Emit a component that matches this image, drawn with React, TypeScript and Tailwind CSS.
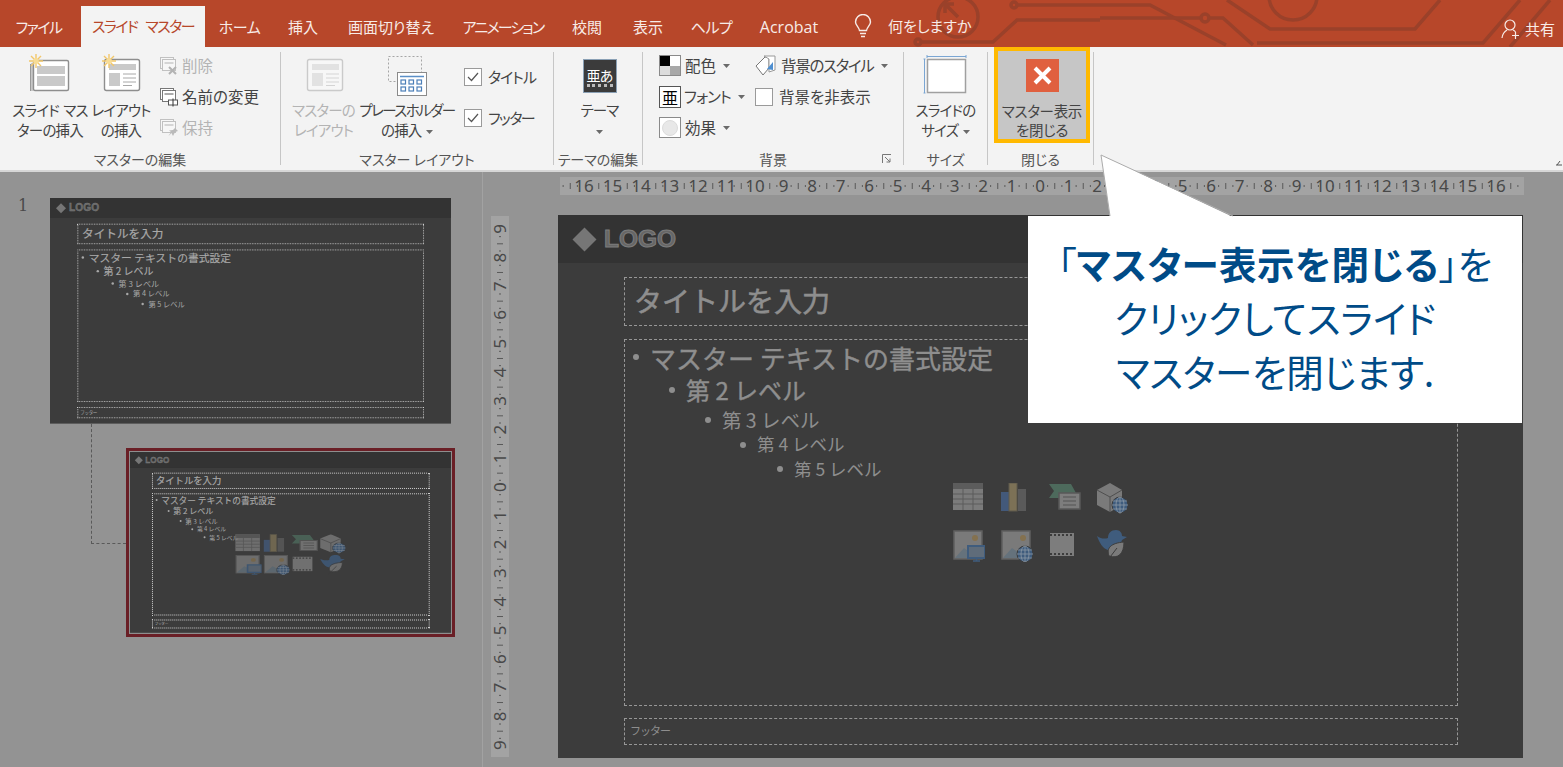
import React from "react";

const Caret = ({ className = "" }: { className?: string }) => (
  <svg width="7" height="4" viewBox="0 0 7 4" className={`inline-block ${className}`}>
    <path d="M0 0h7L3.5 4z" fill="#6a6a6a" />
  </svg>
);

// red title bar circuit decoration
const Circuit = () => (
  <svg width="660" height="47" viewBox="900 0 660 47" className="absolute right-[3px] top-0" fill="none" stroke="#9a412a" strokeWidth="3.5">
    <circle cx="958" cy="17" r="20" />
    <path d="M945 4l13 13M945 4v9M945 4h9" />
    <circle cx="918" cy="42" r="3" />
    <path d="M921 42h72l24-22h83" />
    <circle cx="1014" cy="5" r="3" />
    <path d="M1017 5h133l76 40" />
    <path d="M1100 18h101" />
    <circle cx="1205" cy="18" r="4" />
    <path d="M1209 18h14l30 27" />
    <circle cx="1293" cy="-4" r="24" />
    <path d="M1227 0l43 29h145l25-29" />
    <path d="M1257 43h226l37-43" />
    <path d="M1510 47l40-47" />
  </svg>
);

const Tab = ({ label, className }: { label: string; className: string }) => (
  <div className={`h-full flex items-center justify-center pt-[7px] text-[15px] text-[#f7ebe7] ${className}`}>{label}</div>
);

const TabBar = () => (
  <div className="relative h-[47px] bg-[#b7472a] flex shrink-0 overflow-hidden">
    <Circuit />
    <Tab label="ファイル" className="w-[77px] tracking-[-1.5px]" />
    <div className="ml-[4px] mt-[6px] h-[41px] w-[124px] bg-[#f3f3f3] text-[#b7472a] text-[15px] tracking-[-1.5px] [word-spacing:6px] flex items-center justify-center">スライド マスター</div>
    <Tab label="ホーム" className="w-[69px] tracking-[-0.5px]" />
    <Tab label="挿入" className="w-[58px]" />
    <Tab label="画面切り替え" className="w-[118px]" />
    <Tab label="アニメーション" className="w-[106px] tracking-[-1.8px]" />
    <Tab label="校閲" className="w-[62px]" />
    <Tab label="表示" className="w-[60px]" />
    <Tab label="ヘルプ" className="w-[67px] tracking-[-0.5px]" />
    <div className="w-[88px] h-full flex items-center justify-center pt-[7px] text-[16px] text-[#f7ebe7] font-['Open_Sans',sans-serif]">Acrobat</div>
    <div className="relative ml-[21px] flex items-center pt-[5px] text-[15px] text-[#f7ebe7]">
      <svg width="18" height="24" viewBox="0 0 18 24" fill="none" stroke="#f7ebe7" strokeWidth="1.4" className="mr-[16px]">
        <path d="M5.5 16.5C5 13 1.500 11.500 1.500 8a7.500 7.500 0 0 1 15 0c0 3.500-3.500 5-4 8.500z" />
        <path d="M6 19.500h6M7 22.500h4" />
      </svg>
      何をしますか
    </div>
    <div className="absolute right-[8px] top-0 h-full flex items-center pt-[11px] text-[15px] text-[#f7ebe7]">
      <svg width="20" height="21" viewBox="0 0 20 21" fill="none" stroke="#f7ebe7" strokeWidth="1.2" className="mr-[4px]">
        <circle cx="9" cy="6" r="5" />
        <path d="M1 19c.5-4 2.500-6.500 5-8M12 11c1 .5 2 1.200 2.500 2M14.500 13v7M11 16.500h7" />
      </svg>
      共有
    </div>
  </div>
);

const Star = ({ x, y }: { x: number; y: number }) => (
  <g stroke="#f2c76a" strokeWidth="1.4">
    <path d={`M${x - 7} ${y}h14M${x} ${y - 7}v14M${x - 5} ${y - 5}l10 10M${x + 5} ${y - 5}l-10 10`} />
    <circle cx={x} cy={y} r="2.800" fill="#f7dc95" stroke="none" />
  </g>
);

const InsertSlideIcon = () => (
  <svg width="44" height="48" viewBox="0 0 44 48">
    <path d="M2.500 12v27M4 11v28" stroke="#9a9a9a" fill="none" />
    <rect x="5.500" y="8.500" width="35" height="30" rx="1.500" fill="#fff" stroke="#8e8e8e" strokeWidth="1.400" />
    <rect x="9" y="14" width="28" height="8" fill="#c9c9c9" />
    <rect x="9" y="24" width="28" height="10" fill="#c9c9c9" />
    <Star x={8} y={9} />
  </svg>
);

const LayoutIcon = ({ faded = false, star = false }: { faded?: boolean; star?: boolean }) => (
  <svg width="44" height="48" viewBox="0 0 44 48" className={faded ? "opacity-40" : ""}>
    <rect x="5.500" y="7.500" width="35" height="31" rx="2" fill="#fff" stroke="#8e8e8e" strokeWidth="1.400" />
    <rect x="10" y="12" width="27" height="6" fill="#c9c9c9" />
    <rect x="10" y="21" width="11" height="13" fill="#c9c9c9" />
    <path d="M24 22h13M24 26h13M24 30h13M24 33.500h9" stroke="#a8a8a8" />
    {star && <Star x={10} y={9} />}
  </svg>
);

const PlaceholderIcon = () => (
  <svg width="44" height="48" viewBox="0 0 44 48">
    <rect x="3.500" y="4.500" width="33" height="25" fill="none" stroke="#a5a5a5" strokeDasharray="2 2" />
    <rect x="12.500" y="20.500" width="29" height="23" fill="#fff" stroke="#8a8a8a" />
    <path d="M15 24.500h24" stroke="#5a8fc7" strokeWidth="1.500" />
    <g fill="none" stroke="#4c7fb8" strokeWidth="1.200">
      <rect x="16" y="28" width="4.500" height="4" />
      <rect x="24" y="28" width="4.500" height="4" />
      <rect x="32" y="28" width="4.500" height="4" />
      <rect x="16" y="35" width="4.500" height="4" />
      <rect x="24" y="35" width="4.500" height="4" />
      <rect x="32" y="35" width="4.500" height="4" />
    </g>
  </svg>
);

const SmallStack = ({ kind, faded }: { kind: "x" | "rename" | "pin"; faded?: boolean }) => (
  <svg width="20" height="20" viewBox="0 0 20 20" className={`mr-[3px] ${faded ? "opacity-40" : ""}`}>
    <rect x="1.500" y="1.500" width="13" height="11" fill="#fff" stroke="#777" />
    <rect x="3.500" y="3.500" width="13" height="11" fill="#fff" stroke="#777" />
    <rect x="5.500" y="6" width="9" height="2" fill="#aaa" />
    {kind === "x" && <path d="M10 11l7 7M17 11l-7 7" stroke="#555" strokeWidth="2" />}
    {kind === "rename" && (
      <g>
        <rect x="9.500" y="13" width="9" height="5" fill="#fff" stroke="#555" />
        <path d="M14 11.500v8" stroke="#333" />
      </g>
    )}
    {kind === "pin" && <path d="M16 10l3 3-3 1-2 4-1.500-3-3 3 2.500-4-2-1.500 4-.5z" fill="#666" />}
  </svg>
);

const BigButton = ({ icon, lines, className = "", faded = false }: { icon: React.ReactNode; lines: React.ReactNode[]; className?: string; faded?: boolean }) => (
  <div className={`flex flex-col items-center text-[14.500px] tracking-[-0.8px] leading-[20px] whitespace-nowrap ${faded ? "text-[#b4b4b4]" : "text-[#444]"} ${className}`}>
    <div className="h-[48px] flex justify-center">{icon}</div>
    {lines.map((line, i) => (
      <div key={i}>{line}</div>
    ))}
  </div>
);

const SmallRow = ({ icon, label, faded = false, caret = false, labelClass = "" }: { icon: React.ReactNode; label: string; faded?: boolean; caret?: boolean; labelClass?: string }) => (
  <div className={`h-[31px] flex items-center text-[15.500px] whitespace-nowrap ${faded ? "text-[#b4b4b4]" : "text-[#444]"}`}>
    {icon}
    <span className={labelClass}>{label}</span>
    {caret && <Caret className="ml-[7px]" />}
  </div>
);

const CheckBox = ({ checked = true }: { checked?: boolean }) => (
  <div className="w-[18px] h-[18px] bg-white border border-[#9a9a9a] mr-[6px] flex items-center justify-center">
    {checked && (
      <svg width="12" height="10" viewBox="0 0 12 10" fill="none" stroke="#555" strokeWidth="1.200">
        <path d="M1 5l3.500 3.500L11 1" />
      </svg>
    )}
  </div>
);

const Group = ({ label, className, children, launcher = false }: { label: string; className: string; children: React.ReactNode; launcher?: boolean }) => (
  <div className={`relative h-[113px] mt-[5px] border-r border-[#c6c6c6] flex flex-col shrink-0 ${className}`}>
    <div className="h-[95px] flex">{children}</div>
    <div className="h-[18px] pt-[6px] flex items-center justify-center text-[14px] text-[#555] whitespace-nowrap">{label}</div>
    {launcher && (
      <svg width="10" height="10" viewBox="0 0 10 10" className="absolute right-[11px] bottom-[1px]" fill="none" stroke="#777">
        <path d="M.5 9V.5H9M3 3l5 5M8 4.500V8H4.500" />
      </svg>
    )}
  </div>
);

const Ribbon = () => (
  <div className="relative h-[125px] bg-[#f3f3f3] border-b-2 border-[#d6d6d6] flex shrink-0">
    <Group label="マスターの編集" className="w-[281px]">
      <BigButton
        icon={<InsertSlideIcon />}
        lines={[<span key="l" className="[word-spacing:2px]">スライド マス</span>, "ターの挿入"]}
        className="ml-[12px] w-[76px]"
      />
      <BigButton icon={<LayoutIcon star />} lines={["レイアウト", "の挿入"]} className="ml-[3px] w-[60px]" />
      <div className="ml-[8px] -mt-[2px]">
        <SmallRow icon={<SmallStack kind="x" faded />} label="削除" faded />
        <SmallRow icon={<SmallStack kind="rename" />} label="名前の変更" />
        <SmallRow icon={<SmallStack kind="pin" faded />} label="保持" faded />
      </div>
    </Group>
    <Group label="マスター レイアウト" className="w-[273px]">
      <BigButton icon={<LayoutIcon faded />} lines={["マスターの", "レイアウト"]} faded className="ml-[12px] w-[61px]" />
      <BigButton
        icon={<PlaceholderIcon />}
        lines={[
          <span key="l" className="tracking-[-1.6px]">プレースホルダー</span>,
          <span key="p">の挿入 <Caret className="ml-[2px] align-middle" /></span>,
        ]}
        className="ml-[4px] w-[98px]"
      />
      <div className="ml-[8px] mt-[16px]">
        <div className="h-[41px] flex items-start text-[15px] text-[#444] whitespace-nowrap"><CheckBox /><span className="-mt-[2px] tracking-[-1px]">タイトル</span></div>
        <div className="h-[38px] flex items-start text-[15px] text-[#444] whitespace-nowrap"><CheckBox /><span className="-mt-[2px] tracking-[-1.500px]">フッター</span></div>
      </div>
    </Group>
    <Group label="テーマの編集" className="w-[89px]">
      <BigButton
        icon={
          <div className="mt-[7px] w-[34px] h-[34px] bg-[#3b3b3b] border border-[#8aa0b5] flex flex-col items-center justify-center text-white text-[14px] leading-[18px]">
            亜あ
            <div className="w-[26px] h-[3px] border-t-[3px] border-dotted border-[#bbb]" />
          </div>
        }
        lines={["テーマ", <Caret key="c" />]}
        className="w-full pl-[3px]"
      />
    </Group>
    <Group label="背景" className="w-[261px]" launcher>
      <div className="ml-[16px] -mt-[2px] w-[96px] shrink-0">
        <SmallRow
          caret
          label="配色"
          icon={
            <div className="w-[22px] h-[21px] mr-[4px] grid grid-cols-2 border border-[#8a8a8a]">
              <div className="bg-black" />
              <div className="bg-white" />
              <div className="bg-[#dcdcdc]" />
              <div className="bg-[#a8a8a8]" />
            </div>
          }
        />
        <SmallRow
          caret
          label="フォント"
          labelClass="tracking-[-1px]"
          icon={
            <div className="w-[22px] h-[22px] mr-[3px] bg-white border border-[#555] flex items-center justify-center text-[16px] leading-none text-black">亜</div>
          }
        />
        <SmallRow
          caret
          label="効果"
          icon={
            <div className="w-[22px] h-[21px] mr-[4px] bg-white border border-[#8a8a8a] flex items-center justify-center">
              <div className="w-[16px] h-[16px] rounded-full bg-[#e8e8e8] border border-[#dcdcdc]" />
            </div>
          }
        />
      </div>
      <div className="-mt-[2px]">
        <SmallRow
          caret
          label="背景のスタイル"
          labelClass="tracking-[-1.300px]"
          icon={
            <svg width="22" height="22" viewBox="0 0 22 22" className="mr-[4px]">
              <path d="M1 11l9-9h4v11l-6 7z" fill="#fff" stroke="#777" />
              <path d="M9 1h11v14l-6 2V4z" fill="#fff" stroke="#999" />
              <path d="M12 14l6-7v8z" fill="#4f8fd0" />
            </svg>
          }
        />
        <SmallRow label="背景を非表示" icon={<CheckBox checked={false} />} />
      </div>
    </Group>
    <Group label="サイズ" className="w-[84px]">
      <BigButton
        icon={
          <svg width="46" height="48" viewBox="0 0 46 48">
            <rect x="4.500" y="7.500" width="38" height="33" fill="#fff" stroke="#a0a0a0" strokeWidth="1.500" />
            <path d="M4 4.500h39M4 3v3M43 3v3M1.500 7v34M.5 7h2M.5 41h2" stroke="#7ba6d3" fill="none" />
          </svg>
        }
        lines={["スライドの", <span key="s">サイズ <Caret className="ml-[2px] align-middle" /></span>]}
        className="w-full"
      />
    </Group>
    <Group label="閉じる" className="w-[106px]">
      <div className="ml-[6px] -mt-[5px] w-[96px] h-[96px] shrink-0 bg-[#c6c6c6] border-[4px] border-[#ffb900] flex flex-col items-center pt-[8px] text-[14.500px] tracking-[-0.3px] leading-[19px] text-[#444]">
        <div className="w-[33px] h-[33px] bg-[#e0603f] flex items-center justify-center mb-[9px]">
          <svg width="19" height="19" viewBox="0 0 19 19" stroke="#fff" strokeWidth="4">
            <path d="M2 2l15 15M17 2L2 17" />
          </svg>
        </div>
        <div className="whitespace-nowrap">マスター表示</div>
        <div>を閉じる</div>
      </div>
    </Group>
    <svg width="6" height="6" viewBox="0 0 6 6" className="absolute right-[1px] bottom-[4px]">
      <path d="M0 5h6M1 5l3-4" stroke="#555" fill="none" />
    </svg>
  </div>
);

const HRuler = () => {
  const pitch = 28.5;
  const zero = 480;
  const marks = [];
  for (let i = -17; i <= 16; i++) {
    const x = zero + i * pitch;
    marks.push(
      <g key={i}>
        {i >= -16 && (
          <text x={x} y="15" textAnchor="middle" fontSize="17" fill="#484848" fontFamily="'Noto Sans',sans-serif">
            {Math.abs(i)}
          </text>
        )}
        <rect x={x + pitch / 4} y="8" width="1" height="2" fill="#5a5a5a" />
        <rect x={x + pitch / 2} y="6" width="1" height="6" fill="#5a5a5a" />
        <rect x={x + (pitch * 3) / 4} y="8" width="1" height="2" fill="#5a5a5a" />
      </g>
    );
  }
  return (
    <svg width="964" height="18" viewBox="0 0 964 18" className="block overflow-visible ml-[77px] mt-[5px] bg-[#a3a3a3] shrink-0">
      {marks}
    </svg>
  );
};

const VRuler = () => {
  const pitch = 28.67;
  const zero = 271;
  const marks = [];
  for (let i = -9; i <= 8; i++) {
    const y = zero + i * pitch;
    marks.push(
      <g key={i}>
        <text x="9" y={y} transform={`rotate(-90 9 ${y})`} dy="6" textAnchor="middle" fontSize="17" fill="#484848" fontFamily="'Noto Sans',sans-serif">
          {Math.abs(i)}
        </text>
        <rect x="8" y={y + pitch / 4} width="2" height="1" fill="#5a5a5a" />
        <rect x="6" y={y + pitch / 2} width="6" height="1" fill="#5a5a5a" />
        <rect x="8" y={y + (pitch * 3) / 4} width="2" height="1" fill="#5a5a5a" />
      </g>
    );
  }
  return (
    <svg width="18" height="541" viewBox="0 0 18 541" className="block overflow-visible mt-[1px] ml-[8px] bg-[#a3a3a3] shrink-0">
      {marks}
      <text x="9" y={zero + 9 * pitch} transform={`rotate(-90 9 ${zero + 9 * pitch})`} dy="6" textAnchor="middle" fontSize="17" fill="#484848" fontFamily="'Noto Sans',sans-serif">
        9
      </text>
    </svg>
  );
};

const Globe = ({ x, y, r }: { x: number; y: number; r: number }) => (
  <g>
    <circle cx={x} cy={y} r={r} fill="#3f5c7d" stroke="#3c3c3c" />
    <path d={`M${x - r} ${y}h${r * 2}M${x} ${y - r}v${r * 2}M${x - r + 1} ${y - r / 2}h${r * 2 - 2}M${x - r + 1} ${y + r / 2}h${r * 2 - 2}`} stroke="#8d99a6" strokeWidth="0.800" />
    <ellipse cx={x} cy={y} rx={r / 2} ry={r} fill="none" stroke="#8d99a6" strokeWidth="0.800" />
  </g>
);

const PlaceholderPicture = () => (
  <g>
    <rect x="1" y="1" width="28" height="28" fill="#7a7a7a" stroke="#5f5f5f" strokeWidth="1.500" />
    <circle cx="22" cy="8" r="3" fill="#84714f" />
    <path d="M2 28l9-10 7 5 4-3 6 8z" fill="#65727c" />
  </g>
);

// cells are sized by the grid class, thumbnails stretch them
const iconSvg = { viewBox: "0 0 32 32", preserveAspectRatio: "none", className: "w-full h-full" };

const SlideIcons = ({ grid }: { grid: string }) => (
  <div className={`grid ${grid}`}>
    <svg {...iconSvg}>
      <rect x="0" y="0" width="30" height="27" fill="#7b7b7b" />
      <rect x="0" y="0" width="30" height="6" fill="#5c5c5c" />
      <path d="M0 11h30M0 16h30M0 21h30M10 6v21M20 6v21" stroke="#5c5c5c" />
    </svg>
    <svg {...iconSvg}>
      <rect x="0" y="9" width="8" height="19" fill="#43597a" />
      <rect x="8" y="0" width="8" height="28" fill="#7c7156" stroke="#5f5a4d" />
      <rect x="17" y="6" width="8" height="22" fill="#5a5a5a" />
    </svg>
    <svg {...iconSvg}>
      <path d="M0 1h22l5 9-4 8H10V15H0l5-7z" fill="#4d6a5c" />
      <rect x="10" y="10" width="21" height="16" fill="#7d7d7d" stroke="#585858" strokeWidth="1.500" />
      <path d="M14 14h13M14 18h13M14 22h13" stroke="#555" />
    </svg>
    <svg {...iconSvg}>
      <path d="M13 0l12 7v15l-12 7L0 22V7z" fill="#7a7a7a" />
      <path d="M0 7l13 7 12-7M13 14v15" stroke="#4e4e4e" fill="none" />
      <Globe x={23} y={22} r={8} />
    </svg>
    <svg {...iconSvg}>
      <PlaceholderPicture />
      <rect x="15" y="16" width="17" height="12" fill="#5f6c7a" stroke="#3f5c7d" strokeWidth="2" />
      <path d="M20 31h7M23.500 28v3" stroke="#3f5c7d" strokeWidth="1.500" />
    </svg>
    <svg {...iconSvg}>
      <PlaceholderPicture />
      <Globe x={24} y={24} r={8} />
    </svg>
    <svg {...iconSvg}>
      <rect x="1" y="3" width="24" height="23" fill="#7d7d7d" />
      <path d="M1 5h24M1 24h24" stroke="#3c3c3c" strokeDasharray="2 2" strokeWidth="2" />
    </svg>
    <svg {...iconSvg}>
      <path d="M0 6c4 3 8 3 11 2 0-5 3-8 8-8 4 0 6 3 6 6l5 1-5 3c-2 8-8 11-14 10C6 19 2 12 0 6z" fill="#3f5c7d" />
      <path d="M12 26c-3-8 2-13 15-14 0 12-6 17-15 14zM10 31l10-13" fill="#7a7a7a" stroke="#3c3c3c" />
    </svg>
  </div>
);

// slide is always laid out at full size, thumbnails shrink it with a scale class
const MasterSlide = ({ dash, text, icons }: { dash: string; text: string; icons?: string }) => {
  const levels = [
    { label: "マスター テキストの書式設定", row: "h-[30px] pl-[8px] text-[26px] [-webkit-text-stroke:0.4px_currentColor]" },
    { label: "第 2 レベル", row: "h-[36px] pl-[44px] text-[24px] [-webkit-text-stroke:0.4px_currentColor]" },
    { label: "第 3 レベル", row: "h-[24px] pl-[80px] text-[19.500px]" },
    { label: "第 4 レベル", row: "h-[25px] pl-[115px] text-[17.500px]" },
    { label: "第 5 レベル", row: "h-[24px] pl-[152px] text-[17.500px]" },
  ];
  return (
    <div className={`w-[965px] h-[543px] bg-[#3c3c3c] flex flex-col [font-feature-settings:normal] ${text}`}>
      <div className="h-[48px] bg-[#333] flex items-center pl-[18px] shrink-0">
        <div className="w-[17px] h-[17px] rotate-45 bg-[#767676]" />
        <div className="ml-[11px] font-['Liberation_Sans',sans-serif] font-bold text-[24.500px] text-[#666] [-webkit-text-stroke:1px_#7d7d7d]">LOGO</div>
      </div>
      <div className="mt-[14px] ml-[66px] w-[834px] flex flex-col">
        <div className={`h-[49px] flex items-center pl-[9px] pb-[4px] text-[28px] [-webkit-text-stroke:0.6px_currentColor] ${dash}`}>タイトルを入力</div>
        <div className={`relative h-[367px] mt-[13px] pt-[2px] ${dash}`}>
          {levels.map((level) => (
            <div key={level.label} className={`flex items-center whitespace-nowrap ${level.row}`}>
              <span className="w-[17px] shrink-0">
                <span className="block w-[6px] h-[6px] rounded-full bg-current" />
              </span>
              {level.label}
            </div>
          ))}
          {icons && (
            <div className="absolute inset-0 flex items-center justify-center">
              <SlideIcons grid={icons} />
            </div>
          )}
        </div>
        <div className={`h-[27px] mt-[12px] flex items-center pl-[5px] pb-[2px] text-[11px] tracking-[-1px] ${dash}`}>フッター</div>
      </div>
    </div>
  );
};

const ThumbPanel = () => (
  <div className="w-[483px] h-full shrink-0 bg-[#939393] border-r border-[#a2a2a2] pt-[26px]">
    <div className="flex">
      <div className="w-[50px] pl-[18px] font-['DejaVu_Serif',serif] text-[16px] leading-[16px] text-[#4a4a4a]">1</div>
      <div className="w-[401px] h-[226px] overflow-hidden">
        <div className="origin-top-left scale-[0.4155]">
          <MasterSlide dash="border-[2px] border-dotted border-[#d0d0d0]" text="text-[#a8a8a8]" />
        </div>
      </div>
    </div>
    <div className="relative ml-[126px] mt-[24px] w-[329px] h-[189px] border-[3px] border-[#6a1f26]">
      <div className="absolute -left-[38px] -top-[27px] w-[35px] h-[120px] border-l border-b border-dashed border-[#5a5a5a]" />
      <div className="w-[323px] h-[183px] border border-[#8e8e8e] overflow-hidden">
        <div className="origin-top-left scale-[0.333]">
          <MasterSlide
            dash="border-[3px] border-dotted border-[#d0d0d0]"
            text="text-[#a8a8a8]"
            icons="grid-cols-[repeat(4,79px)] grid-rows-[repeat(2,60px)] gap-x-[6px] gap-y-[2px] opacity-80"
          />
        </div>
      </div>
    </div>
  </div>
);

const Callout = () => (
  <div className="absolute left-[1028px] top-[216px] w-[494px] h-[207px] bg-white flex flex-col items-center pt-[20px] text-[37.500px] leading-[54px] text-[#004b87] whitespace-nowrap">
    <svg width="145" height="68" viewBox="0 0 145 68" className="absolute left-[67px] -top-[66px]">
      <path d="M6 5l9 62h123z" fill="#fff" />
      <path d="M15 66L6 5l132 61" fill="none" stroke="#ababab" />
    </svg>
    <div>「<span className="font-bold tracking-[0.5px]">マスター表示を閉じる</span>」を</div>
    <div>クリックしてスライド</div>
    <div className="tracking-[-0.3px]">マスターを閉じます.</div>
  </div>
);

export default function App() {
  return (
    <div className="relative w-[1563px] h-[767px] overflow-hidden flex flex-col font-['Noto_Sans_CJK_JP',sans-serif] [font-feature-settings:'palt']">
      <TabBar />
      <Ribbon />
      <div className="flex-1 flex min-h-0">
        <ThumbPanel />
        <div className="flex-1 bg-[#949494] flex flex-col">
          <HRuler />
          <div className="flex mt-[20px]">
            <VRuler />
            <div className="ml-[49px]">
              <MasterSlide
                dash="border border-dashed border-[#979797]"
                text="text-[#8e8e8e]"
                icons="grid-cols-[repeat(4,32px)] grid-rows-[repeat(2,32px)] gap-x-[16px] gap-y-[15px]"
              />
            </div>
          </div>
        </div>
      </div>
      <Callout />
    </div>
  );
}
